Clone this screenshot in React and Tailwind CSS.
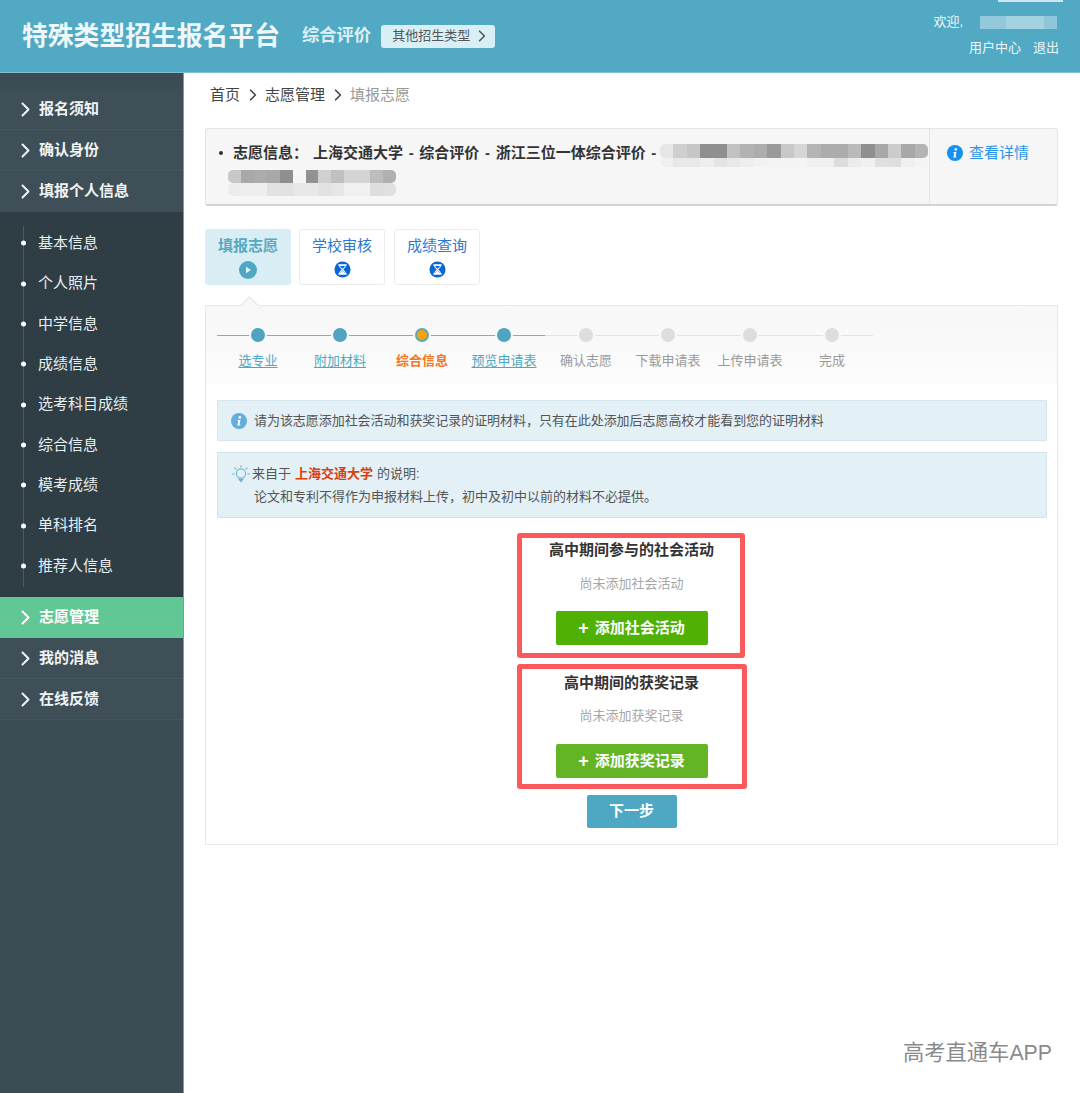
import React from "react";

const font = "font-['Liberation_Sans','Noto_Sans_CJK_SC',sans-serif]";

const Chevron = ({ className = "" }) => (
  <svg viewBox="0 0 9 15" className={className} fill="none" stroke="currentColor" strokeWidth="2" strokeLinecap="round" strokeLinejoin="round">
    <path d="M1.5 1.5 7.5 7.5 1.5 13.5" />
  </svg>
);

const Hourglass = () => (
  <svg viewBox="0 0 18 18" className="mt-[5px] h-[17px] w-[17px]">
    <circle cx="9" cy="9" r="8.5" fill="#0b66d4" />
    <path d="M4.600 4.300h8.800M4.600 13.700h8.800" fill="none" stroke="#fff" strokeWidth="1.600" />
    <path d="M5.800 4.800h6.400c0 2-1.800 3-3.200 4.200 1.400 1.200 3.200 2.200 3.200 4.200H5.800c0-2 1.800-3 3.200-4.200C7.600 7.800 5.800 6.800 5.800 4.800Z" fill="none" stroke="#fff" strokeWidth="1.100" strokeLinejoin="round" />
    <path d="M6.600 12.800c.2-1.200 1.400-1.900 2.400-2.600 1 .7 2.200 1.400 2.400 2.600Z" fill="#fff" />
  </svg>
);

const Play = () => (
  <svg viewBox="0 0 18 18" className="mt-[5px] h-[18px] w-[18px]">
    <circle cx="9" cy="9" r="9" fill="#4fa8c3" />
    <path d="M7 5.800 12 9 7 12.200Z" fill="#e4f3f8" />
  </svg>
);

const InfoIcon = ({ color, className }) => (
  <svg viewBox="0 0 16 16" className={className}>
    <circle cx="8" cy="8" r="8" fill={color} />
    <circle cx="8.800" cy="4.400" r="1.300" fill="#fff" />
    <path d="M6.600 7h2.900l-1.100 4.400h1.100l-.3 1H6.300l1.100-4.400H6.400Z" fill="#fff" />
  </svg>
);

const Bulb = () => (
  <svg viewBox="0 0 20 20" className="-ml-[1px] h-[20px] w-[20px] shrink-0" fill="none" stroke="#6cb4dc" strokeWidth="1.100" strokeLinecap="round">
    <circle cx="10" cy="9.500" r="4.600" />
    <path d="M8 15.200h4l-2 2.400Z" fill="#6cb4dc" />
    <path d="M10 1.500v1.600M3.800 4l1.200 1.100M16.200 4 15 5.100M1.500 10h1.700M16.800 10h1.700" />
  </svg>
);

const Mosaic = ({ cells, className }) => (
  <div className={`flex overflow-hidden rounded-[5px] blur-[0.5px] ${className}`}>
    {cells.map((c, i) => (
      <div key={i} className={`h-full flex-1 ${c}`} />
    ))}
  </div>
);

const top1 = ["bg-[#e6e6e6]","bg-[#cfcfcf]","bg-[#c6c6c6]","bg-[#8f8f8f]","bg-[#8f8f8f]","bg-[#c2c2c2]","bg-[#b2b2b2]","bg-[#adadad]","bg-[#9a9a9a]","bg-[#c8c8c8]","bg-[#d6d6d6]","bg-[#b4b4b4]","bg-[#acacac]","bg-[#acacac]","bg-[#bababa]","bg-[#8f8f8f]","bg-[#a8a8a8]","bg-[#cccccc]","bg-[#a8a8a8]","bg-[#b4b4b4]"];
const top2 = ["bg-[#f0f0f0]","bg-[#e8e8e8]","bg-[#e8e8e8]","bg-[#eeeeee]","bg-[#e4e4e4]","bg-[#e8e8e8]","bg-[#eeeeee]","bg-[#f2f2f2]","bg-[#f4f4f4]","bg-[#f4f4f4]","bg-[#f4f4f4]","bg-[#f0f0f0]","bg-[#f0f0f0]","bg-[#dddddd]","bg-[#ececec]","bg-[#f0f0f0]","bg-[#e0e0e0]","bg-[#dedede]","bg-[#f0f0f0]","bg-[#f4f4f4]"];
const low1 = ["bg-[#c8c8c8]","bg-[#a8a8a8]","bg-[#acacac]","bg-[#a8a8a8]","bg-[#8f8f8f]","bg-[#f5f5f5]","bg-[#929292]","bg-[#d0d0d0]","bg-[#c0c0c0]","bg-[#d4d4d4]","bg-[#d4d4d4]","bg-[#bdbdbd]","bg-[#b0b0b0]"];
const low2 = ["bg-[#ececec]","bg-[#eeeeee]","bg-[#eeeeee]","bg-[#e2e2e2]","bg-[#e2e2e2]","bg-[#e8e8e8]","bg-[#e8e8e8]","bg-[#e2e2e2]","bg-[#e6e6e6]","bg-[#f0f0f0]","bg-[#f0f0f0]","bg-[#dedede]","bg-[#e0e0e0]"];

const MainItem = ({ label, active, separator = true }) => (
  <div className={`flex h-[41px] items-center pl-[21px] text-[15px] font-bold ${active ? "bg-[#61c795] text-white" : `bg-[#3f4f58] text-[#f1f4f5] ${separator ? "border-b border-[#46565f]" : ""}`}`}>
    <Chevron className="mr-[9px] h-[15px] w-[9px] shrink-0" />
    <span>{label}</span>
  </div>
);

const subs = ["基本信息","个人照片","中学信息","成绩信息","选考科目成绩","综合信息","模考成绩","单科排名","推荐人信息"];

const Sidebar = () => (
  <aside className="flex w-[184px] shrink-0 flex-col border-r border-[#8a949a] bg-[#3c4c55] pt-[16px]">
    <MainItem label="报名须知" />
    <MainItem label="确认身份" />
    <MainItem label="填报个人信息" separator={false} />
    <div className="relative h-[385px] bg-[#2f3d45] pt-[11px]">
      <div className="absolute bottom-[10px] left-[23px] top-[14px] w-px bg-[#4c5b63]" />
      {subs.map((s) => (
        <div key={s} className="relative flex h-[40.350px] items-center pl-[38px] text-[15px] text-[#e8edef]">
          <span className="absolute left-[21px] top-1/2 h-[5px] w-[5px] -translate-y-1/2 rounded-full bg-white" />
          {s}
        </div>
      ))}
    </div>
    <MainItem label="志愿管理" active />
    <MainItem label="我的消息" />
    <MainItem label="在线反馈" />
  </aside>
);

const Header = () => (
  <header className="relative flex h-[73px] shrink-0 items-center border-b border-[#7cc0d4] bg-[#51a9c3] pl-[22px] pr-[21px] text-white">
    <div className="text-[25.800px] font-bold leading-[36px] text-[#eef8fb]">特殊类型招生报名平台</div>
    <div className="ml-[22px] text-[17.300px] font-bold text-[#dceff5]">综合评价</div>
    <button className="ml-[10px] flex h-[23px] w-[114px] items-center rounded-[3px] bg-[#d9eff6] pl-[11px] text-[13px] text-[#555]">
      其他招生类型
      <Chevron className="ml-[8px] h-[12px] w-[8px]" />
    </button>
    <div className="ml-auto flex flex-col items-end self-start pt-[13px] text-[13px] leading-[18px] text-[#eef8fb]">
      <div className="flex h-[17px] items-center">
        <span>欢迎,</span>
        <div className="ml-[17px] mr-[2px] mt-[2px] flex h-[13px] w-[77px] blur-[0.5px]">
          <div className="h-full w-[26px] bg-[#93cadb]" />
          <div className="h-full w-[38px] bg-[#a3d2e1]" />
          <div className="h-full w-[13px] bg-[#8fc6d8]" />
        </div>
      </div>
      <div className="mt-[9px] flex gap-[12px]">
        <span>用户中心</span>
        <span>退出</span>
      </div>
    </div>
    <div className="absolute right-[17px] top-0 h-[2px] w-[65px] bg-[#cfe6ee]" />
  </header>
);

const Tab = ({ label, active }) => (
  <div className={`flex h-[56px] w-[86px] flex-col items-center rounded-[3px] border pt-[6px] text-[15px] leading-[20px] ${active ? "border-[#d6ebf2] bg-[#d9edf4] font-bold text-[#56a9c2]" : "border-[#ececec] bg-white text-[#2c78cf]"}`}>
    <span>{label}</span>
    {active ? <Play /> : <Hourglass />}
  </div>
);

const steps = [
  ["选专业", "done"], ["附加材料", "done"], ["综合信息", "cur"], ["预览申请表", "done"],
  ["确认志愿", "todo"], ["下载申请表", "todo"], ["上传申请表", "todo"], ["完成", "todo"],
];

const Step = ({ label, state }) => (
  <div className="relative flex w-[82px] flex-col items-center">
    <div className="relative flex h-[16px] w-full items-center justify-center">
      <div className={`absolute left-0 right-0 h-px ${state === "todo" ? "bg-[#e2e2e2]" : "bg-[#6fb3c9]"}`} />
      <div className="relative z-10 rounded-full bg-[#f8f8f8] p-[2px]">
        {state === "done" && <div className="h-[14px] w-[14px] rounded-full bg-[#4fa4bf]" />}
        {state === "cur" && <div className="h-[14px] w-[14px] rounded-full border-2 border-[#5da6bb] bg-[#f5a30a]" />}
        {state === "todo" && <div className="h-[14px] w-[14px] rounded-full bg-[#dddddd]" />}
      </div>
    </div>
    <div className={`mt-[9px] whitespace-nowrap text-[13px] leading-[18px] ${state === "done" ? "text-[#4fa8c3] underline underline-offset-2" : state === "cur" ? "font-bold text-[#f5761e]" : "text-[#9a9a9a]"}`}>
      {label}
    </div>
  </div>
);

const AddSection = ({ title, empty, button, btnClass, titleClass, emptyClass, className = "" }) => (
  <section className={`flex h-[125px] flex-col items-center rounded-[3px] border-[5px] border-[#fb5a5c] ${className}`}>
    <h3 className={`text-[15px] font-bold leading-[20px] text-[#333] ${titleClass}`}>{title}</h3>
    <p className={`text-[13px] leading-[20px] text-[#a6a6a6] ${emptyClass}`}>{empty}</p>
    <button className={`flex h-[34px] w-[152px] items-center justify-center gap-[6px] rounded-[2px] text-[15px] font-bold text-white ${btnClass}`}>
      <span className="text-[18px] leading-[20px]">+</span>
      {button}
    </button>
  </section>
);

export default function App() {
  return (
    <div className={`${font} flex h-[1093px] flex-col overflow-hidden bg-white`}>
      <Header />
      <div className="relative flex min-h-0 flex-1">
        <Sidebar />
        <main className="flex-1 pl-[21px] pr-[22px]">
          <nav className="mt-[12px] flex h-[20px] items-center pl-[5px] text-[15px] leading-[20px] text-[#444]">
            <span>首页</span>
            <Chevron className="mx-[8.500px] h-[12px] w-[8px]" />
            <span>志愿管理</span>
            <Chevron className="mx-[8.500px] h-[12px] w-[8px]" />
            <span className="text-[#999]">填报志愿</span>
          </nav>

          <div className="mt-[23px] flex h-[78px] rounded-[3px] border border-b-2 border-[#e4e4e4] border-b-[#d4d4d4] bg-[#f6f6f6]">
            <div className="relative w-[723px] shrink-0 pl-[27px] pt-[14px]">
              <span className="absolute left-[13px] top-[22px] h-[4px] w-[4px] rounded-full bg-[#333]" />
              <div className="flex h-[20px] items-center whitespace-nowrap text-[15px] font-bold leading-[20px] text-[#333] [word-spacing:1.500px]">
                <span className="w-[80px]">志愿信息：</span>
                <span>上海交通大学 - 综合评价 - 浙江三位一体综合评价 -</span>
              </div>
              <div className="absolute left-[454px] top-[15px]">
                <Mosaic cells={top1} className="h-[14px] w-[268px]" />
                <Mosaic cells={top2} className="h-[9px] w-[268px]" />
              </div>
              <div className="-ml-[5px] mt-[7px]">
                <Mosaic cells={low1} className="h-[13px] w-[168px]" />
                <Mosaic cells={low2} className="h-[13px] w-[168px]" />
              </div>
            </div>
            <div className="flex flex-1 items-start border-l border-[#e4e4e4] pl-[17px] pt-[14px] text-[15px] leading-[20px] text-[#2b95e9]">
              <InfoIcon color="#1390f0" className="mr-[6px] mt-[2px] h-[16px] w-[16px]" />
              查看详情
            </div>
          </div>

          <div className="mt-[23px] flex gap-[8px]">
            <Tab label="填报志愿" active />
            <Tab label="学校审核" />
            <div className="ml-px"><Tab label="成绩查询" /></div>
          </div>

          <div className="relative mt-[20px] h-[540px] border border-[#e8e8e8]">
            <div className="absolute -top-[7px] left-[37px] h-[13px] w-[13px] rotate-45 border-l border-t border-[#e4e4e4] bg-[#f8f8f8]" />
            <div className="flex h-[78px] bg-gradient-to-b from-[#f7f7f7] to-[#fcfcfc] pl-[11px] pt-[21px]">
              {steps.map(([l, s]) => <Step key={l} label={l} state={s} />)}
            </div>
            <div className="pl-[11px] pr-[10px] pt-[16px]">
              <div className="flex h-[41px] items-center border border-[#d4e7ef] bg-[#e3f0f6] pl-[13px] text-[13px] tracking-[-0.05px] text-[#555]">
                <InfoIcon color="#64addd" className="mr-[7px] h-[16px] w-[16px] shrink-0" />
                请为该志愿添加社会活动和获奖记录的证明材料，只有在此处添加后志愿高校才能看到您的证明材料
              </div>
              <div className="mt-[11px] h-[66px] border border-[#cfe5ee] bg-[#e3f0f6] pl-[14px] pt-[9px] text-[13px] leading-[23px] text-[#555]">
                <div className="flex h-[23px] items-center">
                  <Bulb />
                  <span className="ml-[1px]">来自于</span>
                  <span className="mx-[4px] font-bold text-[#d8400e]">上海交通大学</span>
                  <span>的说明:</span>
                </div>
                <div className="pl-[22px]">论文和专利不得作为申报材料上传，初中及初中以前的材料不必提供。</div>
              </div>
            </div>
            <div className="mt-[15px] flex flex-col items-center">
              <AddSection title="高中期间参与的社会活动" empty="尚未添加社会活动" button="添加社会活动" btnClass="mt-[17px] bg-[#4eb103]" titleClass="mt-[2px]" emptyClass="mt-[14px]" className="-ml-[2px] w-[228px] pl-[2px]" />
              <AddSection title="高中期间的获奖记录" empty="尚未添加获奖记录" button="添加获奖记录" btnClass="mt-[18px] bg-[#63b525]" titleClass="mt-[4px]" emptyClass="mt-[13px]" className="mt-[6px] w-[230px]" />
              <button className="mt-[6px] h-[33px] w-[90px] rounded-[2px] bg-[#4fa8c3] text-[15px] font-bold text-white">下一步</button>
            </div>
          </div>
        </main>
        <div className="absolute bottom-[26px] right-[28px] text-[21.300px] leading-[28px] text-[#8a8a8a]">高考直通车APP</div>
      </div>
    </div>
  );
}
